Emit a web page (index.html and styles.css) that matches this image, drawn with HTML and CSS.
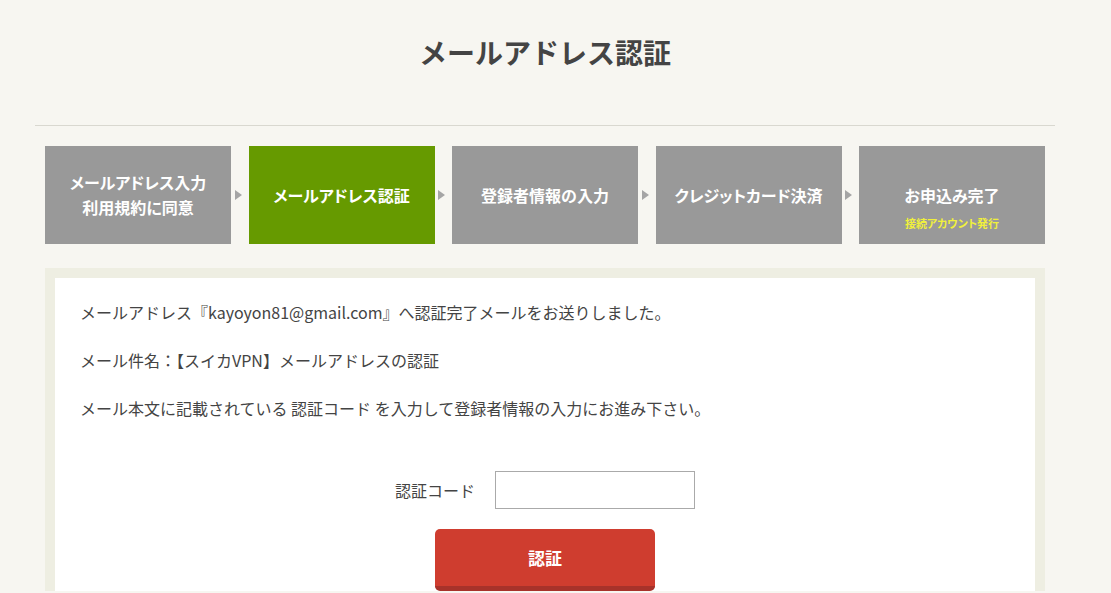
FILE: index.html
```html
<!DOCTYPE html>
<html lang="ja">
  <head>
    <meta charset="UTF-8" />
    <meta name="viewport" content="width=device-width, initial-scale=1.0" />
    <title>メールアドレス認証</title>
    <link rel="stylesheet" href="styles.css">
  </head>
  <body>
    <div class="wrap">
      <h1 class="page-title">メールアドレス認証</h1>

      <ol class="steps">
        <li class="step">メールアドレス入力<br>利用規約に同意</li>
        <li class="step current">メールアドレス認証</li>
        <li class="step">登録者情報の入力</li>
        <li class="step">クレジットカード決済</li>
        <li class="step">お申込み完了<span class="step-note">接続アカウント発行</span></li>
      </ol>

      <div class="panel">
        <div class="panel-body">
          <p>メールアドレス『kayoyon81@gmail.com』へ認証完了メールをお送りしました。</p>
          <p>メール件名：【スイカVPN】メールアドレスの認証</p>
          <p>メール本文に記載されている 認証コード を入力して登録者情報の入力にお進み下さい。</p>

          <form class="verify-form" onsubmit="return false;">
            <div class="field">
              <label for="code">認証コード</label>
              <input type="text" id="code" />
            </div>
            <button type="submit" class="btn-submit">認証</button>
          </form>
        </div>
      </div>
    </div>
  </body>
</html>
```

FILE: styles.css
```css
body {
  margin: 0;
  background-color: #f7f6f1;
  color: #444444;
  font-family: "Noto Sans CJK JP", "Noto Sans", sans-serif;
}

.wrap {
  width: 1020px;
  margin-left: 35px;
}

.page-title {
  margin: 0;
  height: 126px;
  padding-top: 30px;
  box-sizing: border-box;
  border-bottom: 1px solid #d9d8d0;
  text-align: center;
  font-size: 28px;
  font-weight: bold;
  line-height: 44px;
  color: #444444;
}

.steps {
  list-style: none;
  margin: 20px 10px 0;
  padding: 0;
  display: flex;
  justify-content: space-between;
}

.step {
  position: relative;
  width: 186px;
  height: 98px;
  background-color: #999999;
  color: #ffffff;
  font-size: 16px;
  font-weight: bold;
  line-height: 25px;
  font-feature-settings: "palt";
  display: flex;
  flex-direction: column;
  align-items: center;
  justify-content: center;
  text-align: center;
}

.step.current {
  background-color: #669a00;
}

.step + .step::before {
  content: "";
  position: absolute;
  left: -14px;
  top: 44px;
  border-left: 7px solid #a5a5a5;
  border-top: 5px solid transparent;
  border-bottom: 5px solid transparent;
}

.step-note {
  color: #f0f03c;
  font-size: 11px;
  line-height: 14px;
  margin-top: 8px;
  margin-bottom: -22px;
}

.panel {
  margin: 24px 10px 0;
  border: 10px solid #eeeee2;
  border-bottom: none;
  background-color: #ffffff;
}

.panel-body {
  padding: 22px 25px 0;
  font-size: 16px;
  line-height: 24px;
}

.panel-body p {
  margin: 0 0 24px;
}

.verify-form {
  margin-top: 51px;
  display: flex;
  flex-direction: column;
  align-items: center;
}

.field {
  display: flex;
  align-items: center;
  gap: 20px;
}

.field label {
  font-size: 16px;
}

.field input {
  width: 200px;
  height: 38px;
  box-sizing: border-box;
  border: 1px solid #aaaaaa;
  background: #ffffff;
}

.btn-submit {
  margin-top: 20px;
  width: 220px;
  height: 62px;
  border: none;
  border-bottom: 5px solid #a7322a;
  border-radius: 5px;
  background-color: #cf3d2f;
  color: #ffffff;
  font-family: inherit;
  font-size: 17px;
  font-weight: bold;
  cursor: pointer;
}
```
